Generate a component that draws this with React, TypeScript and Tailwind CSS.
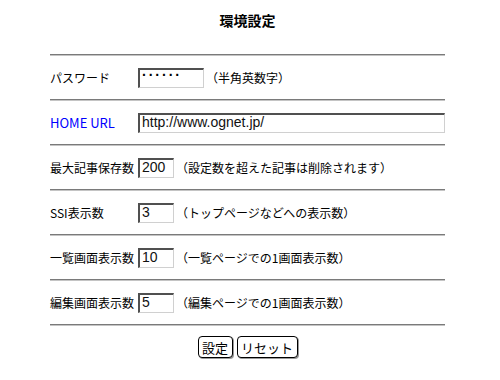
const ROWS = [
  { label: "パスワード", value: "······", width: "w-[66px]", hint: "（半角英数字）", dots: true },
  { label: "HOME URL", value: "http://www.ognet.jp/", width: "w-[307px]", blue: true },
  { label: "最大記事保存数", value: "200", width: "w-[36px]", hint: "（設定数を超えた記事は削除されます）" },
  { label: "SSI表示数", value: "3", width: "w-[36px]", hint: "（トップページなどへの表示数）" },
  { label: "一覧画面表示数", value: "10", width: "w-[36px]", hint: "（一覧ページでの1画面表示数）" },
  { label: "編集画面表示数", value: "5", width: "w-[36px]", hint: "（編集ページでの1画面表示数）" },
];

function Rule() {
  return <div className="h-0 border-t border-b border-t-[#7a7a7a] border-b-[#c4c4c4]" />;
}

export default function App() {
  return (
    <div
      className="h-[380px] w-[500px] bg-white pl-[50px] text-[12px] text-black"
      style={{ fontFamily: '"Noto Sans CJK JP", sans-serif' }}
    >
      <div className="w-[395px]">
        <h1 className="pt-[12px] pb-[26px] text-center text-[14px] font-bold leading-[16px]">環境設定</h1>
        <Rule />
        {ROWS.map((r) => (
          <div key={r.label}>
            <div className="flex h-[43px] items-center">
              <span
                className={
                  r.blue
                    ? "w-[88px] shrink-0 text-[13px] leading-none text-[#0000ff]"
                    : "w-[88px] shrink-0 leading-none"
                }
              >
                {r.label}
              </span>
              <input
                readOnly
                defaultValue={r.value}
                className={`${r.width} h-[20px] shrink-0 border-t-2 border-l-2 border-r border-b border-t-[#505050] border-l-[#505050] border-r-[#d0d0d0] border-b-[#d0d0d0] bg-white px-[2px] pb-[2px] leading-none text-[#111] outline-none ${
                  r.dots ? "pb-[6px] text-[14px] font-bold tracking-[2px] text-black" : "text-[14px]"
                }`}
                style={{ fontFamily: '"Liberation Sans", sans-serif' }}
              />
              {r.hint && <span className="ml-[2px] leading-none">{r.hint}</span>}
            </div>
            <Rule />
          </div>
        ))}
        <div className="mt-[10px] flex justify-center gap-[4px]">
          <button className="h-[22px] w-[35px] rounded-[4px] border border-black bg-white text-[13px] leading-none shadow-[1px_1px_0_#9a9a9a]">
            設定
          </button>
          <button className="h-[22px] w-[61px] rounded-[4px] border border-black bg-white text-[13px] leading-none shadow-[1px_1px_0_#9a9a9a]">
            リセット
          </button>
        </div>
      </div>
    </div>
  );
}
